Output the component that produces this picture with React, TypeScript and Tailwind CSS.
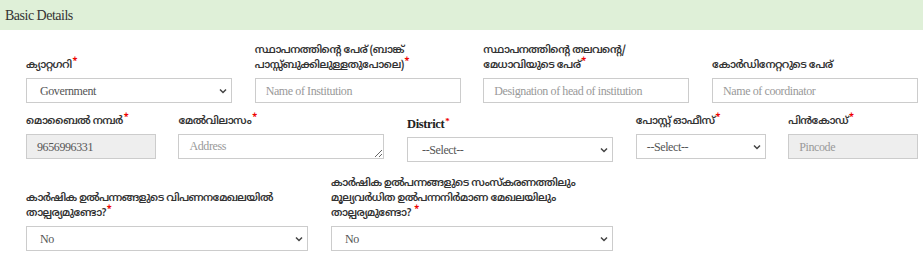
import React from 'react';

const ml = { fontFamily: '"Noto Sans Malayalam", "Noto Sans", "DejaVu Sans", sans-serif' };
const serif = { fontFamily: '"Liberation Serif", "Times New Roman", serif' };

const Star: React.FC = () => <sup className="text-[#e00] text-[9px] ml-[1px] font-bold tracking-normal">*</sup>;

const Label: React.FC<{ children: React.ReactNode; req?: boolean }> = ({ children, req = true }) => (
  <label
    style={ml}
    className="block whitespace-nowrap text-[10.5px] leading-[15px] font-semibold tracking-[-0.6px] text-[#333] mb-[5px]"
  >
    {children}
    {req && <Star />}
  </label>
);

const Chevron: React.FC = () => (
  <svg width="8" height="6" viewBox="0 0 8 6" className="shrink-0">
    <path d="M1 1.5l3 3 3-3" fill="none" stroke="#444" strokeWidth="1.5" />
  </svg>
);

const Select: React.FC<{ value: string; pl?: string }> = ({ value, pl = 'pl-[13px]' }) => (
  <div
    style={serif}
    className={`h-[25px] border border-[#ccc] bg-white flex items-center justify-between ${pl} pr-[4px] text-[12px] tracking-[-0.4px] text-[#555]`}
  >
    <span>{value}</span>
    <Chevron />
  </div>
);

const Input: React.FC<{ ph?: string; value?: string; disabled?: boolean }> = ({ ph, value, disabled }) => (
  <div
    style={serif}
    className={`h-[25px] border border-[#ccc] flex items-center px-[10px] text-[12px] tracking-[-0.4px] ${disabled ? 'bg-[#eee]' : 'bg-white'} ${value ? 'text-[#555]' : 'text-[#999]'}`}
  >
    {value ?? ph}
  </div>
);

const App: React.FC = () => {
  return (
    <div className="w-[923px] h-[261px] bg-white overflow-hidden">
      <div
        style={serif}
        className="h-[30px] bg-[#dff0d8] pl-[5px] flex items-center text-[14px] tracking-[-0.5px] text-[#333]"
      >
        Basic Details
      </div>

      <div className="pl-[26px] pr-[5px]">
        {/* row 1 */}
        <div className="grid grid-cols-12 gap-x-[22.7px] items-end pt-[13px]">
          <div className="col-span-3">
            <Label>ക്യാറ്റഗറി</Label>
            <Select value="Government" />
          </div>
          <div className="col-span-3">
            <Label>
              സ്ഥാപനത്തിന്റെ പേര് (ബാങ്ക്
              <br />
              പാസ്സ്ബുക്കിലുള്ളതുപോലെ)
            </Label>
            <Input ph="Name of Institution" />
          </div>
          <div className="col-span-3">
            <Label>
              സ്ഥാപനത്തിന്റെ തലവന്റെ/
              <br />
              മേധാവിയുടെ പേര്
            </Label>
            <Input ph="Designation of head of institution" />
          </div>
          <div className="col-span-3">
            <Label req={false}>കോർഡിനേറ്ററുടെ പേര്</Label>
            <Input ph="Name of coordinator" />
          </div>
        </div>

        {/* row 2 */}
        <div className="grid grid-cols-12 gap-x-[22.7px] items-start pt-[11px]">
          <div className="col-span-2">
            <Label>മൊബൈൽ നമ്പർ</Label>
            <Input value="9656996331" disabled />
          </div>
          <div className="col-span-3">
            <Label>മേൽവിലാസം</Label>
            <textarea
              placeholder="Address"
              style={serif}
              className="block w-full h-[25px] border border-[#ccc] px-[10px] pt-[4px] text-[12px] leading-[15px] tracking-[-0.4px] text-[#555] placeholder:text-[#999] outline-none"
            />
          </div>
          <div className="col-span-3 pt-[3px]">
            <label
              style={serif}
              className="block text-[12.5px] leading-[15px] font-bold tracking-[-0.4px] text-[#222] mb-[5px]"
            >
              District
              <Star />
            </label>
            <Select value="--Select--" pl="pl-[14px]" />
          </div>
          <div className="col-span-2">
            <Label>പോസ്റ്റ് ഓഫീസ്</Label>
            <Select value="--Select--" pl="pl-[10px]" />
          </div>
          <div className="col-span-2">
            <Label>പിൻകോഡ്</Label>
            <Input ph="Pincode" disabled />
          </div>
        </div>

        {/* row 3 */}
        <div className="grid grid-cols-12 gap-x-[22.7px] items-end pt-[14px]">
          <div className="col-span-4">
            <Label>
              കാർഷിക ഉൽപന്നങ്ങളുടെ വിപണനമേഖലയിൽ
              <br />
              താല്പര്യമുണ്ടോ?
            </Label>
            <Select value="No" />
          </div>
          <div className="col-span-4">
            <Label>
              കാർഷിക ഉൽപന്നങ്ങളുടെ സംസ്കരണത്തിലും
              <br />
              മൂല്യവർധിത ഉൽപന്നനിർമാണ മേഖലയിലും
              <br />
              താല്പര്യമുണ്ടോ?{' '}
            </Label>
            <Select value="No" />
          </div>
        </div>
      </div>
    </div>
  );
};

export default App;
